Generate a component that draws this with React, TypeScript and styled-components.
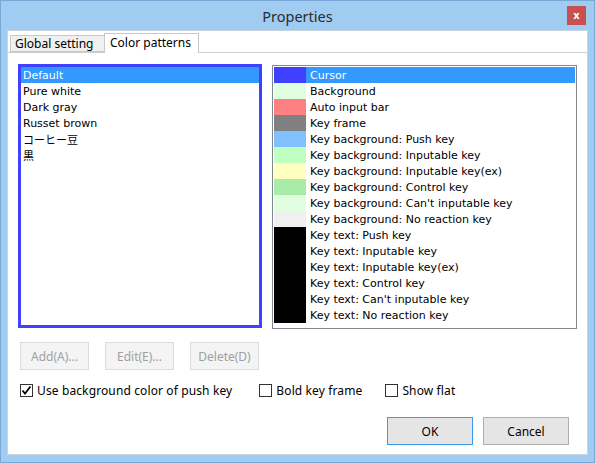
import React from "react"
import styled, { createGlobalStyle } from "styled-components"

const GlobalStyle = createGlobalStyle`
  html, body {
    margin: 0;
    padding: 0;
    background: #9fcbf1;
  }
  * {
    box-sizing: border-box;
  }
`

const UI_FONT = `"Noto Sans", "Open Sans", sans-serif`
const LIST_FONT = `"DejaVu Sans", "Noto Sans CJK JP", sans-serif`

const Window = styled.div`
  width: 595px;
  height: 463px;
  background: #a0ccf2;
  border: 1px solid #78a8d6;
  display: flex;
  flex-direction: column;
`

const TitleBar = styled.div`
  height: 29px;
  display: grid;
  grid-template-columns: 1fr auto 1fr;
  align-items: center;
`

const Title = styled.div`
  grid-column: 2;
  font-family: ${UI_FONT};
  font-size: 14.5px;
  color: #2b2b2b;
  padding-top: 1px;
`

const CloseButton = styled.div`
  grid-column: 3;
  justify-self: end;
  align-self: start;
  margin-top: 5px;
  margin-right: 8px;
  width: 19px;
  height: 19px;
  background: #c75050;
  color: #fff;
  font-family: "DejaVu Sans", sans-serif;
  font-weight: bold;
  font-size: 10px;
  display: flex;
  align-items: center;
  justify-content: center;
`

const Client = styled.div`
  flex: 1;
  margin: 0 6px 7px 6px;
  background: #fff;
  border: 1px solid #c6d4e2;
  display: flex;
  flex-direction: column;
`

const TabStrip = styled.div`
  display: flex;
  align-items: flex-end;
  height: 22px;
  padding-left: 2px;
  border-bottom: 1px solid #cfcfcf;
`

const Tab = styled.div<{ $active?: boolean }>`
  font-family: ${UI_FONT};
  font-size: 12px;
  color: #000;
  height: ${({ $active }) => ($active ? "20px" : "17px")};
  margin-bottom: ${({ $active }) => ($active ? "-1px" : "0")};
  padding: ${({ $active }) => ($active ? "1px 6px 0 5px" : "0 5px 0 4px")};
  background: ${({ $active }) => ($active ? "#fff" : "#f0f0f0")};
  border: 1px solid #c8c8c8;
  border-bottom: ${({ $active }) => ($active ? "none" : "1px solid #c8c8c8")};
  line-height: 16px;
  width: ${({ $active }) => ($active ? "95px" : "95px")};
  margin-right: ${({ $active }) => ($active ? "0" : "-1px")};
  white-space: nowrap;
`

const Panel = styled.div`
  flex: 1;
  display: flex;
  flex-direction: column;
  padding: 11px 9px 0 10px;
`

const ListsRow = styled.div`
  display: flex;
  gap: 10px;
  align-items: flex-start;
`

const PatternList = styled.div`
  width: 244px;
  height: 264px;
  border: 3px solid #4040ff;
`

const ColorList = styled.div`
  width: 305px;
  height: 264px;
  margin-top: 1px;
  border: 1px solid #828790;
  padding: 1px;
`

const Row = styled.div`
  height: 16px;
  display: flex;
  align-items: center;
  font-family: ${LIST_FONT};
  font-size: 11px;
  white-space: nowrap;
`

const PatternRow = styled(Row)<{ $selected?: boolean }>`
  padding-left: 2px;
  color: ${({ $selected }) => ($selected ? "#fff" : "#000")};
  background: ${({ $selected }) => ($selected ? "#3399ff" : "transparent")};
`

const Swatch = styled.div<{ $color: string }>`
  width: 32px;
  height: 16px;
  background: ${({ $color }) => $color};
  flex-shrink: 0;
`

const ColorLabel = styled.div<{ $selected?: boolean }>`
  flex: 1;
  height: 16px;
  display: flex;
  align-items: center;
  padding-left: 4px;
  color: ${({ $selected }) => ($selected ? "#fff" : "#000")};
  background: ${({ $selected }) => ($selected ? "#3399ff" : "transparent")};
`

const ButtonRow = styled.div`
  display: flex;
  gap: 16px;
  margin-top: 13px;
  padding-left: 2px;
`

const Button = styled.div<{ $disabled?: boolean; $default?: boolean; $width: number }>`
  width: ${({ $width }) => $width}px;
  height: 28px;
  display: flex;
  align-items: center;
  justify-content: center;
  font-family: ${UI_FONT};
  font-size: 12px;
  color: ${({ $disabled }) => ($disabled ? "#a0a0a0" : "#000")};
  background: ${({ $disabled }) => ($disabled ? "#f4f4f4" : "#e5e5e5")};
  border: 1px solid
    ${({ $disabled, $default }) =>
      $default ? "#3c9bea" : $disabled ? "#dcdcdc" : "#adadad"};
`

const OptionsRow = styled.div`
  display: flex;
  align-items: center;
  margin-top: 12px;
  padding-left: 2px;
`

const CheckLabel = styled.label<{ $after: number }>`
  display: flex;
  align-items: center;
  gap: 4px;
  margin-right: ${({ $after }) => $after}px;
  font-family: ${UI_FONT};
  font-size: 12px;
  letter-spacing: 0.12px;
  color: #000;
  white-space: nowrap;
`

const Box = styled.span`
  width: 13px;
  height: 13px;
  border: 1px solid #333;
  background: #fff;
  display: flex;
  align-items: center;
  justify-content: center;
`

const FooterRow = styled.div`
  display: flex;
  justify-content: flex-end;
  gap: 10px;
  margin-top: 18px;
  padding-right: 9px;
`

const patterns = ["Default", "Pure white", "Dark gray", "Russet brown", "コーヒー豆", "黒"]

const colors: [string, string][] = [
  ["#4040ff", "Cursor"],
  ["#e0ffe0", "Background"],
  ["#ff8080", "Auto input bar"],
  ["#808080", "Key frame"],
  ["#80c0ff", "Key background: Push key"],
  ["#c0ffc0", "Key background: Inputable key"],
  ["#ffffc0", "Key background: Inputable key(ex)"],
  ["#a8eca8", "Key background: Control key"],
  ["#e0ffe0", "Key background: Can't inputable key"],
  ["#f0f0f0", "Key background: No reaction key"],
  ["#000000", "Key text: Push key"],
  ["#000000", "Key text: Inputable key"],
  ["#000000", "Key text: Inputable key(ex)"],
  ["#000000", "Key text: Control key"],
  ["#000000", "Key text: Can't inputable key"],
  ["#000000", "Key text: No reaction key"],
]

const Check: React.FC<{ checked?: boolean }> = ({ checked }) => (
  <Box>
    {checked && (
      <svg width="11" height="11" viewBox="0 0 11 11">
        <path d="M1.5 5.5 L4 8.5 L9.5 1.5" fill="none" stroke="#000" strokeWidth="1.8" />
      </svg>
    )}
  </Box>
)

export default function App() {
  return (
    <>
      <GlobalStyle />
      <Window>
        <TitleBar>
          <Title>Properties</Title>
          <CloseButton>x</CloseButton>
        </TitleBar>
        <Client>
          <TabStrip>
            <Tab>Global setting</Tab>
            <Tab $active>Color patterns</Tab>
          </TabStrip>
          <Panel>
            <ListsRow>
              <PatternList>
                {patterns.map((p, i) => (
                  <PatternRow key={p} $selected={i === 0}>
                    {p}
                  </PatternRow>
                ))}
              </PatternList>
              <ColorList>
                {colors.map(([c, label], i) => (
                  <Row key={label}>
                    <Swatch $color={c} />
                    <ColorLabel $selected={i === 0}>{label}</ColorLabel>
                  </Row>
                ))}
              </ColorList>
            </ListsRow>
            <ButtonRow>
              <Button $disabled $width={69}>Add(A)...</Button>
              <Button $disabled $width={69}>Edit(E)...</Button>
              <Button $disabled $width={69}>Delete(D)</Button>
            </ButtonRow>
            <OptionsRow>
              <CheckLabel $after={27}>
                <Check checked />
                Use background color of push key
              </CheckLabel>
              <CheckLabel $after={23}>
                <Check />
                Bold key frame
              </CheckLabel>
              <CheckLabel $after={0}>
                <Check />
                Show flat
              </CheckLabel>
            </OptionsRow>
            <FooterRow>
              <Button $default $width={86}>OK</Button>
              <Button $width={86}>Cancel</Button>
            </FooterRow>
          </Panel>
        </Client>
      </Window>
    </>
  )
}
